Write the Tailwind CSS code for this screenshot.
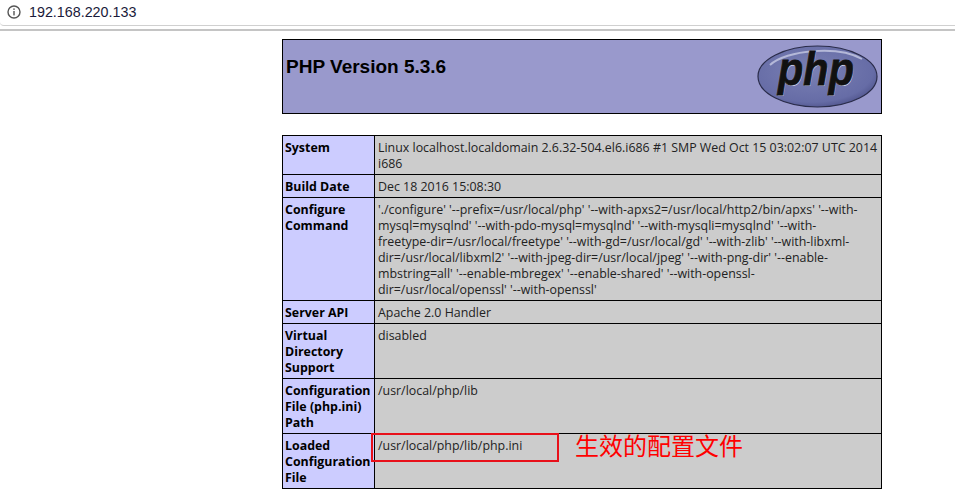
<!DOCTYPE html>
<html lang="en">
<head>
    <meta charset="UTF-8">
    <title>phpinfo()</title>
    <script src="https://cdn.jsdelivr.net/npm/@tailwindcss/browser@4"></script>
</head>
<body class="bg-white h-[490px] overflow-hidden font-['Open_Sans','Liberation_Sans',sans-serif] text-[12.4px] leading-4 text-[#222]">
    <!-- Address bar -->
    <div class="h-[31px] border-b-2 border-[#c4c4c4]">
        <div class="h-[26px] border-b border-[#d0d0d0] rounded-bl-sm flex items-center pl-[7px] gap-[8px]">
            <svg width="14" height="14" viewBox="0 0 14 14" fill="none" class="mt-[-1px]">
                <circle cx="7" cy="7" r="6" stroke="#555" stroke-width="1.4" />
                <rect x="6.3" y="6" width="1.4" height="4.4" fill="#555" />
                <rect x="6.3" y="3.4" width="1.4" height="1.5" fill="#555" />
            </svg>
            <span class="text-[14.3px] font-['Liberation_Sans',sans-serif] text-[#1a1a3a] mt-[-2px]">192.168.220.133</span>
        </div>
    </div>

    <div class="w-[600px] ml-[282px] mt-2">
        <!-- Header -->
        <div class="h-[75px] bg-[#9999cc] border border-black flex justify-between pl-[3px] pr-[3px]">
            <h1 class="text-[19px] font-bold text-black leading-[22px] mt-[16px] font-['Liberation_Sans',sans-serif]">PHP Version 5.3.6</h1>
            <svg width="124" height="66" viewBox="0 0 124 66" class="mt-[3px]">
                <defs>
                    <radialGradient id="logoFill" cx="45%" cy="40%" r="65%">
                        <stop offset="0" stop-color="#7a80b4" />
                        <stop offset="0.8" stop-color="#666ca6" />
                        <stop offset="1" stop-color="#4c5088" />
                    </radialGradient>
                </defs>
                <ellipse cx="63.5" cy="33.5" rx="59.5" ry="30.5" fill="url(#logoFill)" stroke="#2a2c4a" stroke-width="1.2" />
                <path d="M16 22 C 32 7, 84 2, 108 16" fill="none" stroke="#b4b8d8" stroke-width="2" />
                <text x="62.5" y="43" text-anchor="middle" font-family="Liberation Sans" font-weight="700" font-style="italic" font-size="46" fill="#d8daf0" textLength="76" lengthAdjust="spacingAndGlyphs">php</text>
                <text x="62" y="42" text-anchor="middle" font-family="Liberation Sans" font-weight="700" font-style="italic" font-size="46" fill="#111" stroke="#111" stroke-width="0.8" textLength="76" lengthAdjust="spacingAndGlyphs">php</text>
            </svg>
        </div>

        <!-- Info table -->
        <table class="w-[600px] mt-[21px] border-collapse table-fixed">
            <tbody>
                <tr>
                    <td class="w-[92px] bg-[#ccccff] border border-black pl-[2px] pr-[3px] pt-[4px] pb-[2px] align-top font-bold text-black">System</td>
                    <td class="bg-[#cccccc] border border-black px-[3px] pt-[4px] pb-[2px] align-top">Linux localhost.localdomain 2.6.32-504.el6.i686 #1 SMP Wed Oct 15 03:02:07 UTC 2014 i686</td>
                </tr>
                <tr>
                    <td class="bg-[#ccccff] border border-black pl-[2px] pr-[3px] pt-[4px] pb-[2px] align-top font-bold text-black">Build Date</td>
                    <td class="bg-[#cccccc] border border-black px-[3px] pt-[4px] pb-[2px] align-top">Dec 18 2016 15:08:30</td>
                </tr>
                <tr>
                    <td class="bg-[#ccccff] border border-black pl-[2px] pr-[3px] pt-[4px] pb-[2px] align-top font-bold text-black">Configure Command</td>
                    <td class="bg-[#cccccc] border border-black px-[3px] pt-[4px] pb-[2px] align-top">'./configure' '--prefix=/usr/local/php' '--with-apxs2=/usr/local/http2/bin/apxs' '--with-mysql=mysqlnd' '--with-pdo-mysql=mysqlnd' '--with-mysqli=mysqlnd' '--with-<br>freetype-dir=/usr/local/freetype' '--with-gd=/usr/local/gd' '--with-zlib' '--with-libxml-dir=/usr/local/libxml2' '--with-jpeg-dir=/usr/local/jpeg' '--with-png-dir' '--enable-mbstring=all' '--enable-mbregex' '--enable-shared' '--with-openssl-dir=/usr/local/openssl' '--with-openssl'</td>
                </tr>
                <tr>
                    <td class="bg-[#ccccff] border border-black pl-[2px] pr-[3px] pt-[4px] pb-[2px] align-top font-bold text-black">Server API</td>
                    <td class="bg-[#cccccc] border border-black px-[3px] pt-[4px] pb-[2px] align-top">Apache 2.0 Handler</td>
                </tr>
                <tr>
                    <td class="bg-[#ccccff] border border-black pl-[2px] pr-[3px] pt-[4px] pb-[2px] align-top font-bold text-black">Virtual Directory Support</td>
                    <td class="bg-[#cccccc] border border-black px-[3px] pt-[4px] pb-[2px] align-top">disabled</td>
                </tr>
                <tr>
                    <td class="bg-[#ccccff] border border-black pl-[2px] pr-[3px] pt-[4px] pb-[2px] align-top font-bold text-black">Configuration File (php.ini) Path</td>
                    <td class="bg-[#cccccc] border border-black px-[3px] pt-[4px] pb-[2px] align-top">/usr/local/php/lib</td>
                </tr>
                <tr>
                    <td class="bg-[#ccccff] border border-black pl-[2px] pr-[3px] pt-[4px] pb-[2px] align-top font-bold text-black">Loaded Configuration File</td>
                    <td class="relative bg-[#cccccc] border border-black px-[3px] pt-[4px] pb-[2px] align-top">
                        /usr/local/php/lib/php.ini
                        <!-- Annotation over the table -->
                        <div class="absolute left-[-4px] top-[-1px] w-[188px] h-[29px] border-2 border-[#e8101a]"></div>
                        <div class="absolute left-[200px] top-[-4px] text-[24px] leading-[30px] text-[#f00] whitespace-nowrap font-['Noto_Sans_CJK_SC',sans-serif]">生效的配置文件</div>
                    </td>
                </tr>
            </tbody>
        </table>
    </div>
</body>
</html>
